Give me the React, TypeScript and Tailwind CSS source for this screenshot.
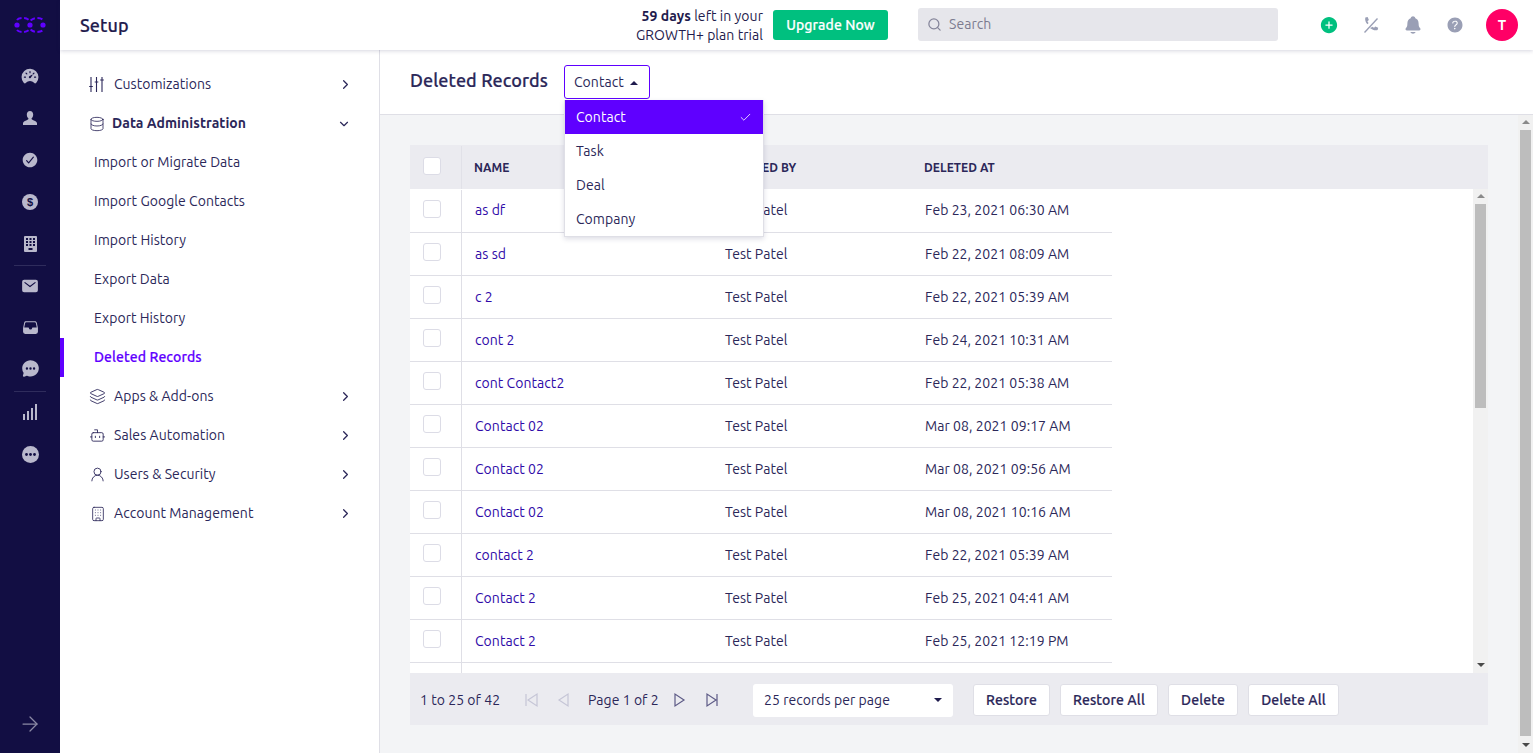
import { ChevronDown, ChevronRight, Check, Database, Layers, Bot, UserRound, Building, Search, ArrowRight } from 'lucide-react';
import {
  IoAddCircle,
  IoCheckmarkCircle,
  IoChatbubbleEllipses,
  IoFileTray,
  IoHelpCircle,
  IoMail,
  IoNotifications,
  IoSpeedometer,
} from 'react-icons/io5';

const FONT = "font-['Ubuntu','Noto_Sans',sans-serif] tracking-[0.05px]";
// no medium cut is installed, so thicken the regular one a little
const MEDIUM = 'font-medium [-webkit-text-stroke:0.2px] tracking-[0.1px]';

const records = [
  ['as df', 'Test Patel', 'Feb 23, 2021 06:30 AM'],
  ['as sd', 'Test Patel', 'Feb 22, 2021 08:09 AM'],
  ['c 2', 'Test Patel', 'Feb 22, 2021 05:39 AM'],
  ['cont 2', 'Test Patel', 'Feb 24, 2021 10:31 AM'],
  ['cont Contact2', 'Test Patel', 'Feb 22, 2021 05:38 AM'],
  ['Contact 02', 'Test Patel', 'Mar 08, 2021 09:17 AM'],
  ['Contact 02', 'Test Patel', 'Mar 08, 2021 09:56 AM'],
  ['Contact 02', 'Test Patel', 'Mar 08, 2021 10:16 AM'],
  ['contact 2', 'Test Patel', 'Feb 22, 2021 05:39 AM'],
  ['Contact 2', 'Test Patel', 'Feb 25, 2021 04:41 AM'],
  ['Contact 2', 'Test Patel', 'Feb 25, 2021 12:19 PM'],
  ['', '', ''],
];

const Logo = () => (
  <svg width="34" height="18" viewBox="0 0 34 18" fill="none">
    <circle cx="4" cy="9" r="2.6" fill="#5f00ff" />
    <circle cx="17" cy="9" r="2.6" fill="#5f00ff" />
    <circle cx="30" cy="9" r="2.6" fill="#5f00ff" />
    <path d="M4 4 C5 2.5 8 2 10.5 2 C13 2 15 3 17 5 C19 3 21 2 23.5 2 C26 2 29 2.5 30 4" stroke="#5f00ff" strokeWidth="2" strokeDasharray="5 2.5" />
    <path d="M4 14 C5 15.5 8 16 10.5 16 C13 16 15 15 17 13 C19 15 21 16 23.5 16 C26 16 29 15.5 30 14" stroke="#5f00ff" strokeWidth="2" strokeDasharray="5 2.5" />
  </svg>
);

const DollarCircle = () => (
  <svg width="16" height="16" viewBox="0 0 16 16">
    <circle cx="8" cy="8" r="8" fill="#b9b8cc" />
    <text x="8" y="12" textAnchor="middle" fontSize="11" fontWeight="700" fill="#120e43" fontFamily="Liberation Sans, sans-serif">
      $
    </text>
  </svg>
);

const BuildingIcon = () => (
  <svg width="13" height="16" viewBox="0 0 13 16">
    <rect width="13" height="16" rx="1" fill="#b9b8cc" />
    {[2, 5, 8].map((y) =>
      [2, 5.5, 9].map((x) => <rect key={`${x}-${y}`} x={x} y={y} width="2" height="2" fill="#120e43" />),
    )}
    <rect x="4.5" y="12" width="4" height="2" fill="#120e43" />
  </svg>
);

const Bars = () => (
  <svg width="14" height="16" viewBox="0 0 14 16" fill="#b9b8cc">
    <rect x="0" y="10" width="2" height="6" />
    <rect x="4" y="7" width="2" height="9" />
    <rect x="8" y="4" width="2" height="12" />
    <rect x="12" y="0" width="2" height="16" />
  </svg>
);

const MoreCircle = () => (
  <svg width="17" height="17" viewBox="0 0 17 17">
    <circle cx="8.5" cy="8.5" r="8.5" fill="#b9b8cc" />
    <circle cx="4.5" cy="8.5" r="1.4" fill="#120e43" />
    <circle cx="8.5" cy="8.5" r="1.4" fill="#120e43" />
    <circle cx="12.5" cy="8.5" r="1.4" fill="#120e43" />
  </svg>
);

const PersonBust = () => (
  <svg width="14" height="14" viewBox="0 0 14 14" fill="#b9b8cc">
    <path d="M7 0c2 0 3.2 1.500 3.2 3.600 0 1.800-.8 3.300-1.700 4 .1.800.6 1.200 1.800 1.700 1.600.6 3.200 1.100 3.700 2.600V14H0v-2.100c.5-1.500 2.100-2 3.700-2.600 1.200-.5 1.700-.9 1.800-1.700-.9-.7-1.700-2.200-1.700-4C3.800 1.500 5 0 7 0z" />
  </svg>
);

const CallSlash = () => (
  <svg width="18" height="18" viewBox="0 0 18 18" fill="#9a9fb5">
    <path d="M2 16 15 2l1 1L3 17z" />
    <path d="M3.300 1.500 5.600 1l1.300 3-1.500 1.200c.3.700.7 1.300 1.200 1.900l-1.100 1.200C3.800 6.500 2.700 4.400 3.300 1.500z" />
    <path d="M9 11.700l1.200-.9c.6.400 1.200.7 1.900 1l1.100-1.300 3 1.300-.6 2.300c-2.800.8-5-.3-7.300-1.900-.1 0-.2-.3-.3-.5z" />
  </svg>
);

const Sliders = () => (
  <svg width="15" height="15" viewBox="0 0 15 15" fill="none" stroke="currentColor" strokeWidth="1.1">
    <path d="M2 0v15M7.500 0v15M13 0v15M.2 9.500h3.600M5.700 5h3.600M11.200 3h3.600" />
  </svg>
);

const RailIcon = ({ children }: { children: React.ReactNode }) => (
  <div className="flex h-[42px] w-full items-center justify-center text-[#b9b8cc]">{children}</div>
);

const Rail = () => (
  <aside className="flex h-full w-[60px] shrink-0 flex-col items-center bg-[#120e43]">
    <div className="flex h-[50px] w-full items-center justify-center">
      <Logo />
    </div>
    <div className="h-[5px]" />
    <RailIcon><IoSpeedometer size={18} /></RailIcon>
    <RailIcon><PersonBust /></RailIcon>
    <RailIcon><IoCheckmarkCircle size={18} /></RailIcon>
    <RailIcon><DollarCircle /></RailIcon>
    <RailIcon><BuildingIcon /></RailIcon>
    <div className="-mb-px h-px w-8 bg-[#2f2c5c]" />
    <RailIcon><IoMail size={18} /></RailIcon>
    <RailIcon><IoFileTray size={17} className="mb-[2px]" /></RailIcon>
    <RailIcon><IoChatbubbleEllipses size={19} className="mb-[3px]" /></RailIcon>
    <div className="-mb-px h-px w-8 bg-[#2f2c5c]" />
    <RailIcon><Bars /></RailIcon>
    <RailIcon><MoreCircle /></RailIcon>
    <div className="mt-auto mb-[17px] text-[#8b89a5]">
      <ArrowRight size={24} strokeWidth={1.25} />
    </div>
  </aside>
);

const TopIcon = ({ children }: { children: React.ReactNode }) => (
  <div className="flex w-[42px] items-center justify-center">{children}</div>
);

const TopBar = () => (
  <header className="relative z-10 flex h-[50px] shrink-0 items-center bg-white pl-5 pr-[15px] shadow-[0_1px_4px_rgba(30,30,80,0.18)]">
    <h1 className={`text-[18px] text-[#1f1b4d] ${MEDIUM}`}>Setup</h1>
    <div className="ml-auto pt-[2px] text-right text-[14px] leading-[19px] text-[#1f1b4d]">
      <div><span className="font-bold">59 days</span> left in your</div>
      <div>GROWTH+ plan trial</div>
    </div>
    <button className={`ml-[10px] h-[30px] w-[115px] rounded-[3px] bg-[#00c07f] pt-px text-[14px] text-white ${MEDIUM}`}>Upgrade Now</button>
    <div className="mb-[1px] ml-[30px] flex h-[33px] w-[360px] items-center gap-[7px] rounded-[3px] bg-[#e6e6eb] pl-[9px] text-[14px] text-[#7c7c90]">
      <Search size={15} className="text-[#85859a]" />
      Search
    </div>
    <div className="ml-[30px] flex items-center">
      <TopIcon><IoAddCircle size={20} className="text-[#00c07f]" /></TopIcon>
      <TopIcon><CallSlash /></TopIcon>
      <TopIcon><IoNotifications size={20} className="text-[#9a9fb5]" /></TopIcon>
      <TopIcon><IoHelpCircle size={20} className="text-[#9a9fb5]" /></TopIcon>
    </div>
    <div className="ml-[10px] flex size-8 items-center justify-center rounded-full bg-[#ff0066] text-[14px] font-bold text-white">T</div>
  </header>
);

const NavRow = ({ icon, label, open = false, bold = false }: { icon: React.ReactNode; label: string; open?: boolean; bold?: boolean }) => (
  <div className={`flex h-[39px] items-center pl-[29px] pr-[28px] text-[14px] text-[#2b2759] ${bold ? 'font-bold' : ''}`}>
    <span className={`flex items-center justify-start text-[#2b2759] ${bold ? 'w-[23px]' : 'w-[25px]'}`}>{icon}</span>
    <span>{label}</span>
    <span className={`ml-auto ${open ? '' : '-mr-[2px]'}`}>
      {open ? <ChevronDown size={14} /> : <ChevronRight size={15} />}
    </span>
  </div>
);

const SubRow = ({ label, active = false }: { label: string; active?: boolean }) => (
  <div className={`flex h-[39px] items-center text-[14px] ${active ? `border-l-4 border-[#5f00ff] pl-[30px] text-[#5f00ff] ${MEDIUM}` : 'pl-[34px] text-[#2b2759]'}`}>{label}</div>
);

const SettingsNav = () => (
  <nav className="w-[320px] shrink-0 border-r border-[#dfdfe6] bg-white pt-[15px]">
    <NavRow icon={<Sliders />} label="Customizations" />
    <NavRow icon={<Database size={16} strokeWidth={1.25} />} label="Data Administration" open bold />
    <SubRow label="Import or Migrate Data" />
    <SubRow label="Import Google Contacts" />
    <SubRow label="Import History" />
    <SubRow label="Export Data" />
    <SubRow label="Export History" />
    <SubRow label="Deleted Records" active />
    <NavRow icon={<Layers size={17} strokeWidth={1.25} />} label="Apps & Add-ons" />
    <NavRow icon={<Bot size={17} strokeWidth={1.25} />} label="Sales Automation" />
    <NavRow icon={<UserRound size={17} strokeWidth={1.25} />} label="Users & Security" />
    <NavRow icon={<Building size={16} strokeWidth={1.25} className="ml-[1px]" />} label="Account Management" />
  </nav>
);

const Checkbox = () => <span className="mb-[4px] block size-[18px] rounded-[3px] border border-[#dcdce6] bg-white" />;

const Arrow = ({ up = false, className }: { up?: boolean; className?: string }) => (
  <span className={`block h-0 w-0 border-x-[4px] border-x-transparent ${up ? 'border-b-[4px]' : 'border-t-[4px]'} ${className}`} />
);

const ContactMenu = () => (
  <div className="absolute left-0 top-[35px] z-20 w-[200px] border border-t-0 border-[#dfdfe6] bg-white shadow-[0_2px_5px_rgba(30,30,80,0.15)]">
    <div className="flex h-[34px] items-center justify-between bg-[#5f00ff] pl-[11px] pr-[11px] pt-px text-white">
      Contact
      <Check size={13} strokeWidth={1.5} />
    </div>
    {['Task', 'Deal', 'Company'].map((item) => (
      <div key={item} className="flex h-[34px] items-center pl-[11px] pt-px text-[#2b2759]">{item}</div>
    ))}
  </div>
);

const TableRow = ({ row }: { row: string[] }) => (
  <div className="group flex h-[43px] shrink-0 items-center border-b border-[#dfdfe6] text-[14px]">
    <div className="flex h-full w-[52px] shrink-0 items-center border-r border-[#dfdfe6] pl-[13px]">
      {row[0] && <Checkbox />}
    </div>
    <div className="w-[263px] pl-[13px] text-[#2f0aa8] group-first:mb-[2px]">{row[0]}</div>
    <div className="w-[200px] text-[#2b2759] group-first:mb-[2px]">{row[1]}</div>
    <div className="w-[187px] text-[#2b2759] group-first:mb-[2px]">{row[2]}</div>
  </div>
);

const Scrollbar = ({ thumb }: { thumb: string }) => (
  <div className="flex h-full w-[15px] shrink-0 flex-col items-center bg-[#f1f1f1] pt-[5px]">
    <Arrow up className="border-b-[#8a8a8a]" />
    <div className={`mt-[6px] w-[11px] bg-[#bdbdbd] ${thumb}`} />
    <Arrow className="mb-[6px] mt-auto border-t-[#4a4a4a]" />
  </div>
);

const PageIcon = ({ d, faded = false, className }: { d: string; faded?: boolean; className?: string }) => (
  <svg width="16" height="16" viewBox="0 0 16 16" fill="none" className={className} stroke={faded ? '#c5c5d6' : '#5d5a86'} strokeWidth="1.2">
    <path d={d} />
  </svg>
);

const FooterButton = ({ label, width }: { label: string; width: string }) => (
  <button className={`h-[32px] rounded-[3px] border border-[#dfdfe6] bg-white text-[#2b2759] ${MEDIUM} ${width}`}>{label}</button>
);

const Footer = () => (
  <div className="flex h-[52px] shrink-0 items-center bg-[#ebebf0] pl-[10px] pt-[2px] text-[14px] text-[#2b2759]">
    <span className="w-[104px]">1 to 25 of 42</span>
    <PageIcon faded d="M2 2v12M13 2v12L4 8z" className="mr-[15px]" />
    <PageIcon faded d="M13 2v12L4 8z" className="mr-[17px]" />
    <span className="w-[84px]">Page 1 of 2</span>
    <PageIcon d="M3 2v12l9-6z" className="mr-[16px]" />
    <PageIcon d="M3 2v12l9-6zM13 2v12" />
    <div className="ml-[33px] flex h-[33px] w-[200px] items-center justify-between rounded-[3px] bg-white pl-[11px] pr-[11px]">
      25 records per page
      <Arrow className="border-t-[#1f1b4d]" />
    </div>
    <div className="ml-5 flex items-center gap-[10px]">
      <FooterButton label="Restore" width="w-[77px]" />
      <FooterButton label="Restore All" width="w-[98px]" />
      <FooterButton label="Delete" width="w-[70px]" />
      <FooterButton label="Delete All" width="w-[91px]" />
    </div>
  </div>
);

const Main = () => (
  <main className="flex min-w-0 flex-1 flex-col">
    <div className="flex h-[65px] shrink-0 items-center border-b border-[#dfdfe6] bg-white pl-[30px]">
      <h2 className={`mb-[4px] w-[154px] text-[18px] text-[#2b2759] ${MEDIUM}`}>Deleted Records</h2>
      <div className="relative text-[14px]">
        <div className="flex h-[34px] w-[86px] items-center gap-[6px] rounded-[3px] border border-[#5f00ff] pl-[9px] pt-px text-[#2b2759]">
          Contact
          <Arrow up className="border-b-[#1f1b4d]" />
        </div>
        <ContactMenu />
      </div>
    </div>
    <div className="flex min-h-0 flex-1 bg-[#f3f4f6]">
      <div className="flex min-w-0 flex-1 flex-col pb-[28px] pl-[30px] pr-[30px] pt-[30px]">
        <div className="flex h-[44px] shrink-0 items-center bg-[#ebebf0] pt-[1px] text-[12px] font-bold text-[#2b2759]">
          <div className="flex h-full w-[52px] items-center border-r border-[#e1e1e8] pl-[13px]"><Checkbox /></div>
          <div className="w-[263px] pl-[12px]">NAME</div>
          <div className="w-[199px]">DELETED BY</div>
          <div>DELETED AT</div>
        </div>
        <div className="flex min-h-0 flex-1 bg-white">
          <div className="min-w-0 flex-1 overflow-hidden">
            <div className="w-[702px] pt-px">
              {records.map((row, i) => (
                <TableRow key={i} row={row} />
              ))}
            </div>
          </div>
          <Scrollbar thumb="h-[204px]" />
        </div>
        <Footer />
      </div>
      <Scrollbar thumb="h-[606px]" />
    </div>
  </main>
);

export default function App() {
  return (
    <div className={`flex h-[753px] w-[1533px] overflow-hidden ${FONT}`}>
      <Rail />
      <div className="flex min-w-0 flex-1 flex-col">
        <TopBar />
        <div className="flex min-h-0 flex-1">
          <SettingsNav />
          <Main />
        </div>
      </div>
    </div>
  );
}
